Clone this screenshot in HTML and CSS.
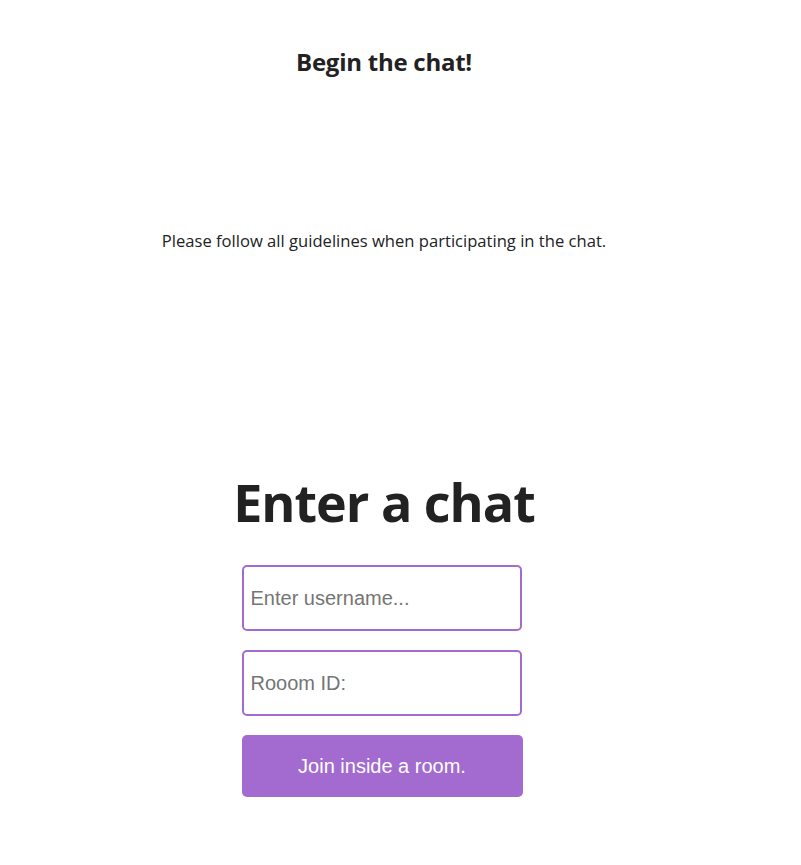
FILE: index.html
```html
<!DOCTYPE html>
<html lang="en">
<head>
<meta charset="utf-8">
<title>Chat</title>
<link rel="stylesheet" href="styles.css">
</head>
<body>
<div class="page">
  <header class="intro">
    <h2 class="intro-title">Begin the chat!</h2>
    <p class="intro-text">Please follow all guidelines when participating in the chat.</p>
  </header>
  <main class="join">
    <h1 class="join-title">Enter a chat</h1>
    <form class="join-form">
      <input class="join-input" type="text" placeholder="Enter username...">
      <input class="join-input" type="text" placeholder="Rooom ID:">
      <button class="join-button" type="button">Join inside a room.</button>
    </form>
  </main>
</div>
</body>
</html>
```
FILE: styles.css
```css
html, body {
  margin: 0;
  padding: 0;
  background: #ffffff;
}
body {
  font-family: "Open Sans", "Liberation Sans", sans-serif;
  color: #222222;
}
.page {
  width: 768px;
  display: flex;
  flex-direction: column;
  align-items: center;
}
.intro {
  display: flex;
  flex-direction: column;
  align-items: center;
  padding-top: 47px;
}
.intro-title {
  margin: 0;
  font-size: 24px;
  font-weight: 700;
  line-height: 30px;
  letter-spacing: -0.25px;
}
.intro-text {
  margin: 152px 0 0;
  font-size: 16.6px;
  line-height: 24px;
}
.join {
  display: flex;
  flex-direction: column;
  align-items: center;
  margin-top: 213px;
}
.join-title {
  margin: 0;
  font-size: 52px;
  font-weight: 700;
  line-height: 72px;
  letter-spacing: -1px;
}
.join-form {
  display: flex;
  flex-direction: column;
  gap: 19px;
  margin-top: 27px;
  margin-right: 4px;
  width: 281px;
}
.join-input {
  box-sizing: border-box;
  height: 66px;
  width: 280px;
  border: 2px solid #a36bcf;
  border-radius: 5px;
  padding: 0 7px;
  font-family: "Liberation Sans", Arial, sans-serif;
  font-size: 20px;
  color: #222;
  outline: none;
}
.join-input::placeholder {
  color: #757575;
}
.join-button {
  box-sizing: border-box;
  height: 62px;
  width: 281px;
  border: none;
  border-radius: 5px;
  background: #a36bcf;
  color: #ffffff;
  font-family: "Liberation Sans", Arial, sans-serif;
  font-size: 20px;
  cursor: pointer;
}
```
